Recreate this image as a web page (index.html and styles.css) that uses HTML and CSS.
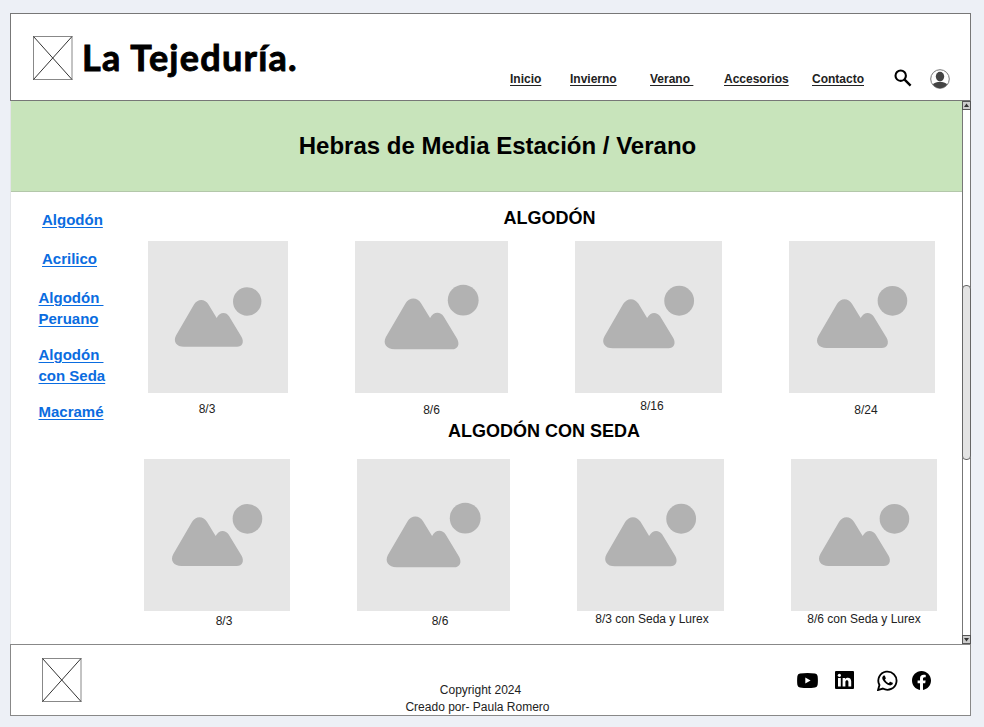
FILE: index.html
```html
<!DOCTYPE html>
<html lang="es">
<head>
<meta charset="utf-8">
<title>La Tejeduría.</title>
<link rel="stylesheet" href="styles.css">
</head>
<body>
<svg class="defs" width="0" height="0" aria-hidden="true">
  <symbol id="photo" viewBox="0 0 140 140">
    <path d="M46 57.5C49.5 51.5 57 51.5 60.500 57.500L68.700 71C71.500 65 78 64.500 81.200 69.500L93.600 90C96.500 95.500 94 99.800 89 99.800H36C28.500 99.800 24.800 94.500 28 88.500Z"/>
    <circle cx="99.200" cy="54.500" r="14.200"/>
  </symbol>
  <symbol id="cross" viewBox="0 0 40 44">
    <rect x=".5" y=".5" width="38.500" height="43" fill="none" stroke="#888"/>
    <path d="M.5 .5L39 43.500M39 .5L.5 43.500" stroke="#333" fill="none"/>
  </symbol>
</svg>
<div class="window">
  <header class="header">
    <svg class="cross"><use href="#cross"/></svg>
    <div class="brand">La Tejeduría.</div>
    <nav class="nav">
      <a class="n1">Inicio</a><a class="n2">Invierno</a><a class="n3">Verano&nbsp;</a><a class="n4">Accesorios</a><a class="n5">Contacto</a>
    </nav>
    <svg class="search" viewBox="0 0 18 18"><circle cx="6.700" cy="6.700" r="5.200" fill="none" stroke="#000" stroke-width="2.100"/><path d="M10.600 10.600L16.600 16.600" stroke="#000" stroke-width="2.400"/></svg>
    <svg class="user" viewBox="0 0 20 20"><circle cx="10" cy="10" r="9.300" fill="#fff" stroke="#777" stroke-width="1"/><ellipse cx="10" cy="7.600" rx="4.200" ry="4.800" fill="#444"/><path d="M2.800 15.300C4.500 13.200 7 12.900 10 12.900S15.500 13.200 17.200 15.300C15.500 18 13 19.300 10 19.300S4.500 18 2.800 15.300Z" fill="#444"/></svg>
  </header>
  <div class="middle">
    <main class="content">
      <h1 class="banner">Hebras de Media Estación / Verano</h1>
      <div class="columns">
        <aside class="side">
          <a class="in">Algodón</a>
          <a class="in">Acrilico</a>
          <a>Algodón&nbsp;<br>Peruano</a>
          <a>Algodón&nbsp;<br>con Seda</a>
          <a>Macramé</a>
        </aside>
        <section class="catalog">
          <h2 class="t1">ALGODÓN</h2>
          <div class="row r1">
            <figure class="a1"><svg><use href="#photo"/></svg><figcaption>8/3</figcaption></figure>
            <figure class="a2"><svg><use href="#photo"/></svg><figcaption>8/6</figcaption></figure>
            <figure class="a3"><svg><use href="#photo"/></svg><figcaption>8/16</figcaption></figure>
            <figure class="a4"><svg><use href="#photo"/></svg><figcaption>8/24</figcaption></figure>
          </div>
          <h2 class="t2">ALGODÓN CON SEDA</h2>
          <div class="row r2">
            <figure class="b1"><svg><use href="#photo"/></svg><figcaption>8/3</figcaption></figure>
            <figure class="b2"><svg><use href="#photo"/></svg><figcaption>8/6</figcaption></figure>
            <figure class="b3"><svg><use href="#photo"/></svg><figcaption>8/3 con Seda y Lurex</figcaption></figure>
            <figure class="b4"><svg><use href="#photo"/></svg><figcaption>8/6 con Seda y Lurex</figcaption></figure>
          </div>
        </section>
      </div>
    </main>
    <div class="scroll">
      <svg class="arrow" viewBox="0 0 9 9"><rect x=".5" y=".5" width="8" height="8" fill="#ccc" stroke="#555"/><path d="M4.500 2.500L7 6H2Z" fill="#333"/></svg>
      <div class="thumb"></div>
      <svg class="arrow" viewBox="0 0 9 9"><rect x=".5" y=".5" width="8" height="8" fill="#ccc" stroke="#555"/><path d="M4.500 6.500L7 3H2Z" fill="#333"/></svg>
    </div>
  </div>
  <footer class="footer">
    <svg class="cross"><use href="#cross"/></svg>
    <p class="copy"><span class="year">Copyright 2024</span><br>Creado por- Paula Romero</p>
    <div class="social">
      <svg class="yt" viewBox="0 0 21 15"><path fill-rule="evenodd" d="M3 .5Q10.500-.5 18 .5Q20.200.8 20.600 3Q21.200 7.500 20.600 12Q20.200 14.200 18 14.500Q10.500 15.500 3 14.500Q.8 14.200.4 12Q-.2 7.500.4 3Q.8.8 3 .5ZM8.300 4.400V10.600L13.600 7.500Z"/></svg>
      <svg class="li" viewBox="0 0 19 18"><rect width="19" height="18" rx="1"/><g fill="#fff"><circle cx="4.400" cy="4.300" r="1.600"/><path d="M3 7H5.800V15.400H3ZM7.600 7H10.200V8.200C11.800 5.900 16.200 6.400 16.200 10.300V15.400H13.400V10.900C13.400 8.500 10.400 8.600 10.400 10.900V15.400H7.600Z"/></g></svg>
      <svg class="wa" viewBox="0 0 24 24"><path d="M17.472 14.382c-.297-.149-1.758-.867-2.030-.967-.273-.099-.471-.148-.67.150-.197.297-.767.966-.940 1.164-.173.199-.347.223-.644.075-.297-.150-1.255-.463-2.390-1.475-.883-.788-1.480-1.761-1.653-2.059-.173-.297-.018-.458.130-.606.134-.133.298-.347.446-.520.149-.174.198-.298.298-.497.099-.198.050-.371-.025-.520-.075-.149-.669-1.612-.916-2.207-.242-.579-.487-.500-.669-.510-.173-.008-.371-.010-.570-.010-.198 0-.520.074-.792.372-.272.297-1.040 1.016-1.040 2.479 0 1.462 1.065 2.875 1.213 3.074.149.198 2.096 3.200 5.077 4.487.709.306 1.262.489 1.694.625.712.227 1.360.195 1.871.118.571-.085 1.758-.719 2.006-1.413.248-.694.248-1.289.173-1.413-.074-.124-.272-.198-.570-.347"/><path d="M1.200 22.900L2.800 17.200A10.400 10.400 0 1 1 6.700 21.200Z" fill="none" stroke="#000" stroke-width="2.100"/></svg>
      <svg class="fb" viewBox="0 0 24 24"><path d="M24 12.073C24 5.400 18.627 0 12 0S0 5.400 0 12.073C0 18.100 4.388 23.100 10.125 24v-8.437H7.078v-3.490h3.047V9.430c0-3.022 1.792-4.690 4.533-4.690 1.312 0 2.686.236 2.686.236v2.970h-1.513c-1.491 0-1.956.930-1.956 1.886v2.240h3.328l-.532 3.490h-2.796V24C19.612 23.100 24 18.100 24 12.073Z"/></svg>
    </div>
  </footer>
</div>
</body>
</html>
```
FILE: styles.css
```css
* { box-sizing: border-box; }
body { margin: 0; background: #edf0f6; font-family: "Liberation Sans", Arial, sans-serif; color: #222; overflow: hidden; }
.defs { display: block; position: absolute; }
svg { flex: none; display: block; }
h1, h2, p, figure { margin: 0; }
.window { width: 961px; height: 703px; margin: 13px 0 0 10px; background: #fff; display: flex; flex-direction: column; }
.header { height: 88px; flex: none; border: 1px solid #777; display: flex; align-items: flex-start; padding-left: 22px; }
.cross { width: 40px; height: 44px; }
.header .cross { margin: 22px 1px 0 -.5px; }
.brand { width: 216px; margin: 20px 0 0 8.5px; font: 700 36px/46px Lato, sans-serif; letter-spacing: 1.25px; color: #000; -webkit-text-stroke: .9px #000; white-space: nowrap; }
.nav { width: 354px; margin: 57px 0 0 212px; display: flex; font-weight: 700; font-size: 12px; line-height: 16px; white-space: nowrap; }
.nav a { text-decoration: underline; text-underline-offset: 2px; }
.n1 { width: 60px; }
.n2 { width: 80px; }
.n3 { width: 74px; }
.n4 { width: 88px; }
.search { width: 18px; height: 18px; margin: 55px 0 0 30px; }
.user { width: 20px; height: 20px; margin: 55px 0 0 18px; }
.middle { height: 543px; display: flex; }
.content { width: 952px; border-left: 1px solid #e3e5e8; }
.banner { height: 91px; padding-left: 22px; background: #c8e4bb; border-bottom: 1px solid #b3c7aa; font-size: 24px; line-height: 90px; color: #000; text-align: center; }
.columns { display: flex; }
.side { width: 123px; padding: 17px 0 0 27.5px; display: flex; flex-direction: column; font-weight: 700; font-size: 15px; line-height: 21px; white-space: nowrap; color: #0a6ce0; }
.side a { text-decoration: underline; text-underline-offset: 2px; margin-bottom: 15px; }
.side .in { margin: 0 0 18px 3.500px; }
.catalog { flex: 1; color: #000; }
.catalog h2 { font-size: 18px; line-height: 22px; }
.t1 { padding: 15px 0 0 369.500px; }
.t2 { padding-left: 314px; }
.row { display: flex; }
.r1 { height: 191px; padding: 12px 0 0 14px; }
.r2 { padding: 17px 0 0 10px; }
figure svg { width: 100%; height: 152px; background: #e6e6e6; fill: #b2b2b2; }
figcaption { font-size: 12px; line-height: 16px; text-align: center; white-space: nowrap; color: #222; }
.a1 { width: 140px; margin-right: 67px; }
.a2 { width: 153px; margin-right: 67px; }
.a3 { width: 147px; margin-right: 67px; }
.a4 { width: 146px; }
.b1 { width: 146px; margin-right: 67px; }
.b2 { width: 153px; margin-right: 67px; }
.b3 { width: 147px; margin-right: 67px; }
.b4 { width: 146px; }
.a1 figcaption { padding: 8px 22px 0 0; }
.a2 figcaption { padding-top: 9px; }
.a3 figcaption { padding: 5px 0 0 7px; }
.a4 figcaption { padding: 9px 0 0 8px; }
.b1 figcaption { padding: 2px 0 0 14px; }
.b2 figcaption { padding: 2px 0 0 13px; }
.b3 figcaption { padding-left: 3px; }
.scroll { width: 9px; border: solid #777; border-width: 0 1px; background: #fff; display: flex; flex-direction: column; align-items: center; justify-content: space-between; }
.arrow { width: 9px; height: 9px; }
.thumb { width: 9px; height: 175px; margin-top: -1px; border: 1px solid #666; border-radius: 4px; background: #e3e3e3; }
.footer { height: 72px; border: 1px solid #888; display: flex; padding-left: 31px; }
.footer .cross { margin-top: 13px; }
.copy { width: 160px; margin: 37px 0 0 315.5px; font-size: 12px; line-height: 17px; text-align: center; white-space: nowrap; }
.year { padding-left: 6px; }
.social { margin: 0 0 0 239.5px; display: flex; height: 70px; align-items: center; }
.yt { width: 21px; height: 15px; }
.li { width: 19px; height: 18px; margin-left: 17px; }
.wa { width: 21px; height: 21px; margin-left: 23px; }
.fb { width: 19px; height: 19px; margin-left: 14px; }
```
